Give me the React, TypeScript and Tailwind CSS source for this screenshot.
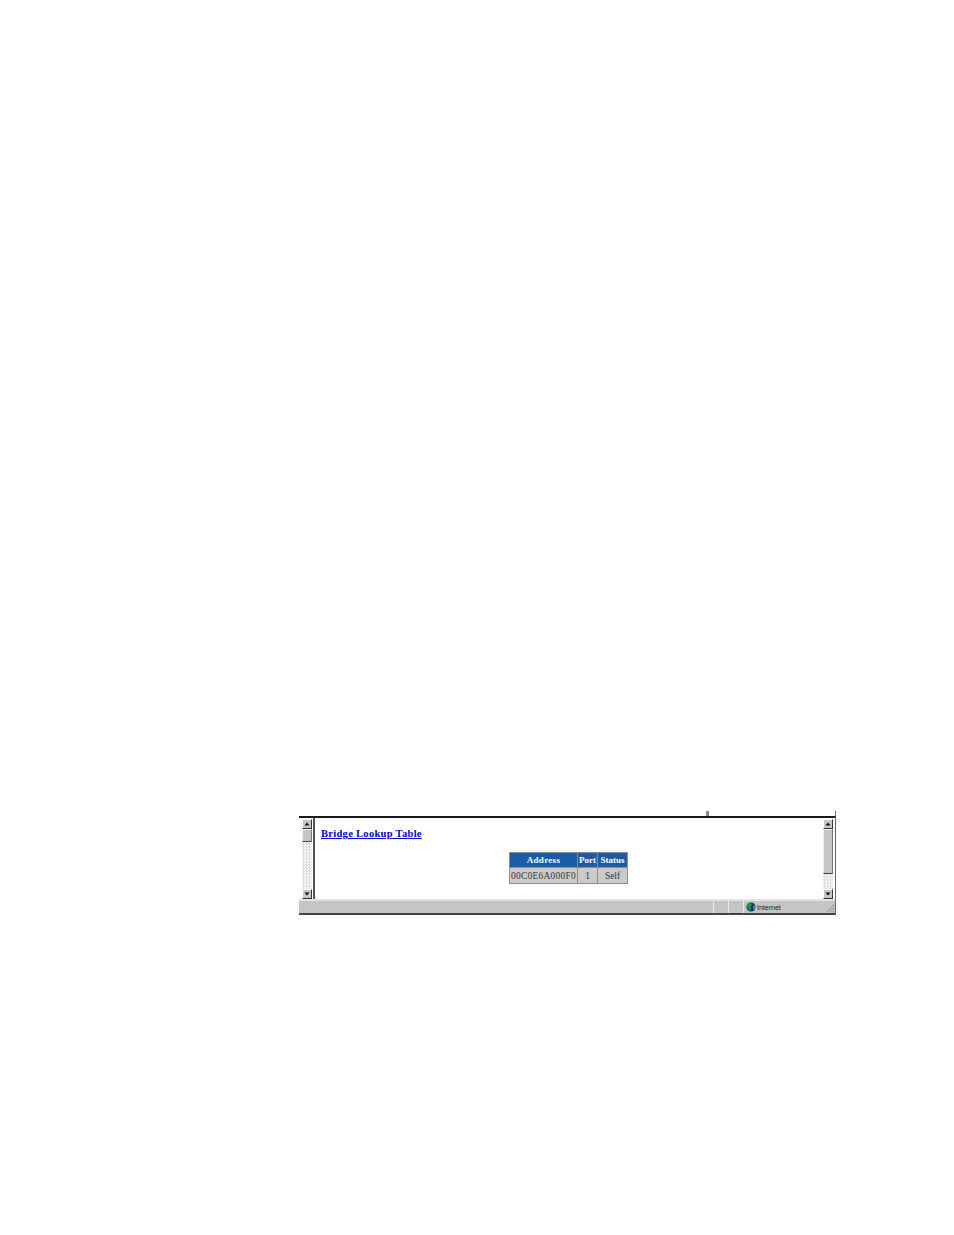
import React from "react";

const serif = "font-['Liberation_Serif',serif]";

// little scrollbar arrow button
const ArrowButton = ({ up }: { up: boolean }) => (
  <div className="w-[10px] h-[10px] bg-[#c6c6c6] border-t border-l border-t-white border-l-white border-b border-r border-b-[#333] border-r-[#333] flex items-center justify-center">
    <svg width="6" height="4" viewBox="0 0 6 4">
      <path d={up ? "M3 0.5 L5.5 3.5 H0.5 Z" : "M0.5 0.5 H5.5 L3 3.5 Z"} fill="#111" />
    </svg>
  </div>
);

const Scrollbar = ({ thumb }: { thumb: string }) => (
  <div className="w-[10px] flex flex-col pt-[1px]">
    <ArrowButton up />
    <div className="flex-1 flex flex-col bg-[repeating-conic-gradient(#dcdcdc_0_25%,#f8f8f8_0_50%)] bg-[length:3px_3px]">
      <div className={`${thumb} bg-[#c4c4c4] border-t border-l border-t-[#eee] border-l-[#eee] border-b border-r border-b-[#444] border-r-[#777]`} />
    </div>
    <ArrowButton up={false} />
  </div>
);

const Globe = () => (
  <svg width="10" height="10" viewBox="0 0 10 10">
    <circle cx="5" cy="5" r="4.5" fill="#16307e" />
    <path d="M2 1.5 L5 0.8 L6 3 L4.2 5 L5.2 7 L3.5 9.2 L2 6 L0.8 4 Z" fill="#1c9a3a" />
    <path d="M7 3.6 L9.5 4.2 L8.8 7.5 L7 7 Z" fill="#23b04a" />
  </svg>
);

export default function App() {
  return (
    <div className="w-[954px] h-[1235px] bg-white pt-[811px] pl-[299px]">
      <div className="relative w-[537px] h-[104px] flex flex-col border-r border-r-[#666]">
        {/* tick sticking out above the frame */}
        <div className="absolute left-[407px] top-0 w-[3px] h-[5px] bg-[#8a8a8a]" />

        <div className="h-[5px] shrink-0" />
        <div className="h-[2px] shrink-0 bg-[#1a1a1a]" />

        <div className="flex-1 flex min-h-0">
          <div className="flex pl-[3px]">
            <Scrollbar thumb="h-[13px]" />
          </div>
          <div className="ml-[1px] w-[2px] bg-[#555]" />

          <div className="flex-1 bg-white pl-[6px] pt-[10px]">
            <a className={`${serif} block text-[10.5px] leading-[12px] font-bold text-[#0000ee] underline tracking-[0.3px]`}>
              Bridge Lookup Table
            </a>
            <table className={`${serif} mt-[12px] ml-[188px] border-collapse text-[9px] leading-[14px] border border-[#8c8c8c]`}>
              <thead>
                <tr className="bg-[#1a5ca8] text-white font-bold">
                  <th className="w-[68px] h-[15px] p-0 border border-[#8c8c8c] tracking-[0.3px]">Address</th>
                  <th className="w-[20px] h-[15px] p-0 border border-[#8c8c8c]">Port</th>
                  <th className="w-[30px] h-[15px] p-0 border border-[#8c8c8c]">Status</th>
                </tr>
              </thead>
              <tbody>
                <tr className="bg-[#cbcbcb] text-[#333]">
                  <td className="h-[16px] p-0 text-center font-normal text-[9.4px] border border-[#8c8c8c] tracking-[0.3px]">00C0E6A000F0</td>
                  <td className="h-[16px] p-0 text-center font-normal text-[9.4px] border border-[#8c8c8c]">1</td>
                  <td className="h-[16px] p-0 text-center font-normal text-[9.4px] border border-[#8c8c8c]">Self</td>
                </tr>
              </tbody>
            </table>
          </div>

          <div className="flex pr-[2px]">
            <Scrollbar thumb="h-[45px]" />
          </div>
        </div>

        {/* status bar */}
        <div className="h-[16px] shrink-0 flex flex-col">
          <div className="h-[2px] bg-[#e2e2e2]" />
          <div className="flex-1 flex bg-[#c6c4c6] items-stretch">
            <div className="flex-1" />
            <div className="w-[15px] border-l border-[#eee]" />
            <div className="w-[15px] border-l border-[#eee]" />
            <div className="w-[92px] border-l border-[#eee] flex items-center pl-[2px] gap-[1px] relative">
              <Globe />
              <span className="font-['Liberation_Sans',sans-serif] text-[7px] leading-none text-[#222]">Internet</span>
              <svg className="absolute right-0 bottom-0" width="10" height="10" viewBox="0 0 10 10">
                <path d="M9 2 L2 9 M9 5 L5 9 M9 8 L8 9" stroke="#8a8a8a" strokeWidth="1" />
              </svg>
            </div>
          </div>
          <div className="h-[2px] bg-[#444]" />
        </div>
      </div>
    </div>
  );
}
